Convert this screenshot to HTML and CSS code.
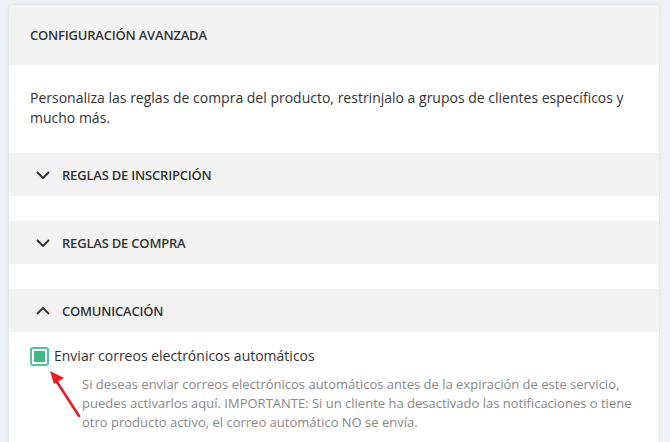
FILE: index.html
```html
<!DOCTYPE html>
<html lang="es">
<head>
    <meta charset="UTF-8">
    <meta name="viewport" content="width=device-width, initial-scale=1.0">
    <title>Configuración avanzada</title>
    <link rel="stylesheet" href="styles.css">
</head>
<body>
    <div class="card">
        <div class="card-header">CONFIGURACIÓN AVANZADA</div>
        <p class="intro">Personaliza las reglas de compra del producto, restrinjalo a grupos de clientes específicos y mucho más.</p>

        <div class="section">
            <svg class="chevron" width="14" height="8" viewBox="0 0 14 8"><path d="M1 1l6 6 6-6" fill="none" stroke="#333" stroke-width="2"/></svg>
            <span>REGLAS DE INSCRIPCIÓN</span>
        </div>

        <div class="section">
            <svg class="chevron" width="14" height="8" viewBox="0 0 14 8"><path d="M1 1l6 6 6-6" fill="none" stroke="#333" stroke-width="2"/></svg>
            <span>REGLAS DE COMPRA</span>
        </div>

        <div class="section section-open">
            <svg class="chevron" width="14" height="8" viewBox="0 0 14 8"><path d="M1 7l6-6 6 6" fill="none" stroke="#333" stroke-width="2"/></svg>
            <span>COMUNICACIÓN</span>
        </div>

        <div class="option">
            <label class="check-row">
                <span class="checkbox"><span class="checkbox-fill"></span></span>
                Enviar correos electrónicos automáticos
            </label>
            <p class="help">Si deseas enviar correos electrónicos automáticos antes de la expiración de este servicio, puedes activarlos aquí. IMPORTANTE: Si un cliente ha desactivado las notificaciones o tiene otro producto activo, el correo automático NO se envía.</p>

            <!-- annotation arrow pointing at the checkbox -->
            <svg class="arrow" width="40" height="52" viewBox="0 0 40 52">
                <path d="M35 48L13 14" stroke="#ea1c24" stroke-width="2.6" stroke-linecap="round"/>
                <path d="M6 3l14 7-10 6z" fill="#ea1c24"/>
            </svg>
        </div>
    </div>
</body>
</html>
```

FILE: styles.css
```css
body {
    font-family: "Open Sans", "Liberation Sans", sans-serif;
    background-color: #eef1f5;
    color: #333;
    margin: 0;
    padding: 5px 11px 0 9px;
}
.card {
    width: 650px;
    background-color: #fff;
    border-radius: 4px;
    box-shadow: 0 0 3px rgba(0, 0, 0, 0.12);
    overflow: hidden;
    min-height: 450px;
}
.card-header {
    height: 60px;
    display: flex;
    align-items: center;
    padding-left: 21px;
    background-color: #f3f3f3;
    font-size: 13px;
    font-weight: 600;
    letter-spacing: -0.2px;
}
.intro {
    margin: 0;
    padding: 23px 6px 25px 21px;
    font-size: 14px;
    line-height: 20px;
}
.section {
    height: 43px;
    display: flex;
    align-items: center;
    gap: 12px;
    padding-left: 27px;
    margin-bottom: 25px;
    background-color: #f3f3f3;
    font-size: 13px;
    font-weight: 600;
    letter-spacing: -0.2px;
}
.section-open {
    margin-bottom: 0;
}
.chevron {
    display: block;
}
.option {
    position: relative;
    padding: 14px 10px 0 21px;
}
.check-row {
    display: flex;
    align-items: center;
    gap: 5px;
    font-size: 14px;
    line-height: 20px;
}
.checkbox {
    width: 15px;
    height: 15px;
    border: 2px solid #52c49a;
    border-radius: 3px;
    display: flex;
    align-items: center;
    justify-content: center;
}
.checkbox-fill {
    width: 11px;
    height: 11px;
    background-color: #3fb685;
}
.help {
    margin: 9px 0 0 52px;
    font-size: 13px;
    line-height: 19px;
    color: #888;
}
.arrow {
    position: absolute;
    left: 35px;
    top: 36px;
}
```
